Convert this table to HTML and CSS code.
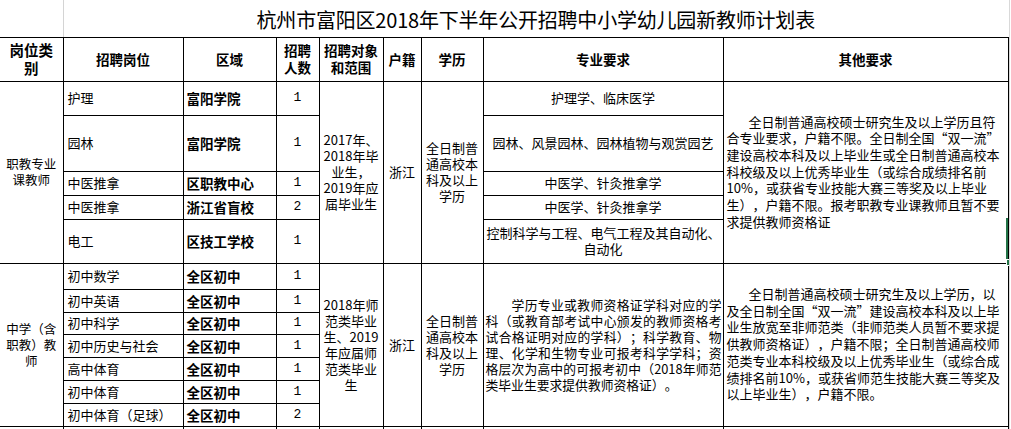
FILE: index.html
```html
<!DOCTYPE html>
<html lang="zh-CN">
<head>
<meta charset="utf-8">
<title>杭州市富阳区2018年下半年公开招聘中小学幼儿园新教师计划表</title>
<link rel="stylesheet" href="styles.css">
</head>
<body>
<div class="sheet">
<table class="plan">
<colgroup>
<col class="c-cat"><col class="c-post"><col class="c-area"><col class="c-num"><col class="c-target"><col class="c-hukou"><col class="c-edu"><col class="c-major"><col class="c-other">
</colgroup>
<tr class="r-title"><td class="blank"></td><td class="title" colspan="8">杭州市富阳区2018年下半年公开招聘中小学幼儿园新教师计划表</td></tr>
<tr class="r-head">
<th class="h-cat">岗位类<br>别</th><th>招聘岗位</th><th>区域</th><th>招聘<br>人数</th><th>招聘对象<br>和范围</th><th>户籍</th><th>学历</th><th>专业要求</th><th>其他要求</th>
</tr>
<tr class="r34">
<td class="cat" rowspan="5">职教专业<br>课教师</td>
<td class="post">护理</td><td class="area">富阳学院</td><td class="num">1</td>
<td class="target" rowspan="5">2017年、<br>2018年毕<br>业生，<br>2019年应<br>届毕业生</td>
<td class="hukou" rowspan="5">浙江</td>
<td class="edu" rowspan="5">全日制普<br>通高校本<br>科及以上<br>学历</td>
<td class="major">护理学、临床医学</td>
<td class="other" rowspan="5"><span class="first">全日制普通高校硕士研究生及以上学历且符</span><br>合专业要求，户籍不限。全日制全国“双一流”<br>建设高校本科及以上毕业生或全日制普通高校本<br>科校级及以上优秀毕业生（或综合成绩排名前<br>10%，或获省专业技能大赛三等奖及以上毕业<br>生），户籍不限。报考职教专业课教师且暂不要<br>求提供教师资格证</td>
</tr>
<tr class="r56">
<td class="post">园林</td><td class="area">富阳学院</td><td class="num">1</td>
<td class="major">园林、风景园林、园林植物与观赏园艺</td>
</tr>
<tr class="r24">
<td class="post">中医推拿</td><td class="area">区职教中心</td><td class="num">1</td>
<td class="major">中医学、针灸推拿学</td>
</tr>
<tr class="r24">
<td class="post">中医推拿</td><td class="area">浙江省盲校</td><td class="num">2</td>
<td class="major">中医学、针灸推拿学</td>
</tr>
<tr class="r44">
<td class="post">电工</td><td class="area">区技工学校</td><td class="num">1</td>
<td class="major">控制科学与工程、电气工程及其自动化、<br>自动化</td>
</tr>
<tr class="r26">
<td class="cat" rowspan="7">中学（含<br>职教）教<br>师</td>
<td class="post">初中数学</td><td class="area">全区初中</td><td class="num">1</td>
<td class="target" rowspan="7">2018年师<br>范类毕业<br>生、2019<br>年应届师<br>范类毕业<br>生</td>
<td class="hukou" rowspan="7">浙江</td>
<td class="edu" rowspan="7">全日制普<br>通高校本<br>科及以上<br>学历</td>
<td class="major just" rowspan="7"><span class="jl first">学历专业或教师资格证学科对应的学</span><span class="jl">科（或教育部考试中心颁发的教师资格考</span><span class="jl">试合格证明对应的学科）；科学教育、物</span><span class="jl">理、化学和生物专业可报考科学学科；资</span><span class="jl">格层次为高中的可报考初中（2018年师范</span><span class="jl last">类毕业生要求提供教师资格证）。</span></td>
<td class="other" rowspan="7"><span class="first">全日制普通高校硕士研究生及以上学历，以</span><br>及全日制全国“双一流”建设高校本科及以上毕<br>业生放宽至非师范类（非师范类人员暂不要求提<br>供教师资格证），户籍不限；全日制普通高校师<br>范类专业本科校级及以上优秀毕业生（或综合成<br>绩排名前10%，或获省师范生技能大赛三等奖及<br>以上毕业生），户籍不限。</td>
</tr>
<tr class="r23">
<td class="post">初中英语</td><td class="area">全区初中</td><td class="num">1</td>
</tr>
<tr class="r22">
<td class="post">初中科学</td><td class="area">全区初中</td><td class="num">1</td>
</tr>
<tr class="r23">
<td class="post">初中历史与社会</td><td class="area">全区初中</td><td class="num">1</td>
</tr>
<tr class="r23">
<td class="post">高中体育</td><td class="area">全区初中</td><td class="num">1</td>
</tr>
<tr class="r23">
<td class="post">初中体育</td><td class="area">全区初中</td><td class="num">1</td>
</tr>
<tr class="r23">
<td class="post">初中体育（足球）</td><td class="area">全区初中</td><td class="num">2</td>
</tr>
<tr class="r30">
<td></td><td></td><td></td><td></td><td></td><td></td><td></td><td></td><td></td>
</tr>
</table>
<div class="sel-edge"></div>
<div class="sel-handle"></div>
</div>
</body>
</html>
```

FILE: styles.css
```css
html, body {
  margin: 0;
  padding: 0;
  background: #ffffff;
  overflow: hidden;
}

body {
  font-family: "Noto Sans CJK SC", "Noto Sans", sans-serif;
  color: #000000;
  text-spacing-trim: space-all;
}

.sheet {
  position: relative;
  width: 1009px;
  height: 429px;
  border-right: 1px solid #d9d9d9;
  overflow: hidden;
}

.plan {
  table-layout: fixed;
  border-collapse: collapse;
  width: 1008px;
  font-size: 13px;
  line-height: 16px;
}

.c-cat { width: 63px; }
.c-post { width: 120px; }
.c-area { width: 93px; }
.c-num { width: 43px; }
.c-target { width: 64px; }
.c-hukou { width: 38px; }
.c-edu { width: 62px; }
.c-major { width: 240px; }
.c-other { width: 285px; }

.plan td,
.plan th {
  border: 1px solid #000000;
  padding: 0 3px;
  vertical-align: middle;
  text-align: center;
  overflow: hidden;
}

.plan tr > :first-child {
  border-left: none;
}

.r-title { height: 37px; }
.r-head { height: 44px; }
.r34 { height: 34px; }
.r56 { height: 56px; }
.r24 { height: 24px; }
.r44 { height: 44px; }
.r26 { height: 26px; }
.r23 { height: 23px; }
.r22 { height: 22px; }
.r30 { height: 30px; }

.plan .r-title td {
  border-top: none;
}

.plan td.blank {
  border-right: 1px solid #d4d4d4;
}

.plan td.title {
  border-left: 1px solid #d4d4d4;
  border-right: none;
  font-size: 20px;
  font-weight: 400;
  line-height: 24px;
  padding-top: 4px;
  letter-spacing: -0.2px;
  white-space: nowrap;
}

.plan th {
  font-size: 13.5px;
  font-weight: 700;
  line-height: 17px;
  padding: 0 2px;
}

.plan th.h-cat {
  font-size: 14.5px;
  line-height: 18px;
}

.plan td.post {
  text-align: left;
  padding-left: 4px;
  white-space: nowrap;
}

.plan td.area {
  text-align: left;
  font-weight: 700;
  font-size: 13.5px;
  padding-left: 3px;
  white-space: nowrap;
}

.plan td.num {
  font-family: "Liberation Mono", "DejaVu Sans Mono", monospace;
  font-size: 13px;
}

.plan td.cat {
  font-size: 12.5px;
  line-height: 16px;
  padding: 0 1px;
}

.plan td.target,
.plan td.edu {
  white-space: nowrap;
  padding: 0 1px;
}

.plan td.hukou {
  padding: 0 1px;
}

.plan td.major {
  white-space: nowrap;
}

.plan td.major.just {
  white-space: normal;
  text-align: left;
  font-size: 12.8px;
  padding: 0 1px 0 2px;
}

.jl {
  display: block;
  text-align: justify;
  text-align-last: justify;
  word-break: keep-all;
}

.jl.first {
  padding-left: 26px;
}

.jl.last {
  text-align-last: left;
}

.plan td.other {
  text-align: left;
  white-space: nowrap;
  padding-left: 3px;
  line-height: 16.7px;
}

.plan td.other .first {
  padding-left: 22px;
}

.sel-edge {
  position: absolute;
  left: 1006px;
  top: 218px;
  width: 2px;
  height: 45px;
  background: #217346;
}

.sel-handle {
  position: absolute;
  left: 1006px;
  top: 259px;
  width: 5px;
  height: 5px;
  background: #217346;
  border: 1px solid #ffffff;
}
```
